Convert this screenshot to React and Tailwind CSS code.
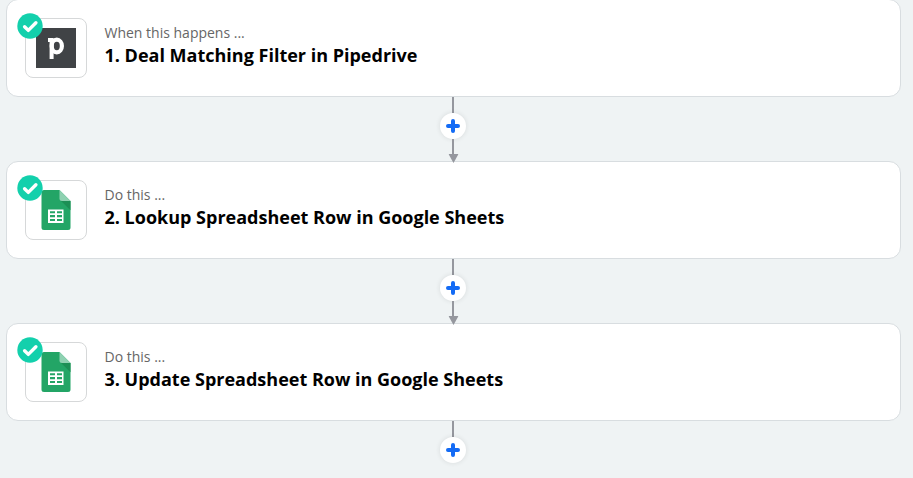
const steps = [
  { id: 1, label: "When this happens ...", title: "1. Deal Matching Filter in Pipedrive", app: "pipedrive" },
  { id: 2, label: "Do this ...", title: "2. Lookup Spreadsheet Row in Google Sheets", app: "sheets" },
  { id: 3, label: "Do this ...", title: "3. Update Spreadsheet Row in Google Sheets", app: "sheets" },
];

const PipedriveLogo = () => (
  <div className="flex h-10 w-10 items-center justify-center bg-[#404346]">
    <svg viewBox="0 0 40 40" className="h-10 w-10" fill="none">
      <path d="M12 12h3.6v19" stroke="#fff" strokeWidth="4" />
      <ellipse cx="20.8" cy="18" rx="5.1" ry="6.3" stroke="#fff" strokeWidth="4.2" />
    </svg>
  </div>
);

const SheetsLogo = () => (
  <svg viewBox="0 0 30 40" className="h-10 w-[30px]">
    <path d="M2.5 0H18.5L29.5 11V37.5a2.5 2.5 0 0 1-2.5 2.5H3A2.5 2.5 0 0 1 .5 37.5V2.5A2.5 2.5 0 0 1 3 0Z" fill="#23a566" />
    <path d="M19.3 10.3 29.5 20.3V11Z" fill="#1c8f55" />
    <path d="M18.5 0 29.5 11H21a2.5 2.5 0 0 1-2.5-2.5Z" fill="#8ed1b1" />
    <path
      d="M7 19.5H22.5V33H7ZM9 21.2V23.2H14V21.2ZM16 21.2V23.2H21V21.2ZM9 25V27.2H14V25ZM16 25V27.2H21V25ZM9 29V31H14V29ZM16 29V31H21V29Z"
      fill="#fff"
      fillRule="evenodd"
    />
  </svg>
);

const CheckBadge = () => (
  <svg viewBox="0 0 26 26" className="absolute -left-[9px] -top-[6px] h-[26px] w-[26px]">
    <circle cx="13" cy="13" r="12.7" fill="#13d0ac" />
    <path d="m7.6 13.7 3.7 3.7 7.6-7.6" fill="none" stroke="#fff" strokeWidth="3.4" strokeLinecap="round" strokeLinejoin="round" />
  </svg>
);

const StepCard = ({ step }) => (
  <section className="flex h-[98px] w-full shrink-0 items-start rounded-xl border border-[#d8dde0] bg-white px-[18px] pt-[18px]">
    <div className="relative flex h-[60px] w-[62px] shrink-0 items-center justify-center rounded-lg border border-[#d6d8d9]">
      {step.app === "pipedrive" ? <PipedriveLogo /> : <SheetsLogo />}
      <CheckBadge />
    </div>
    <div className="ml-[17.5px] pt-1">
      <p className="text-sm leading-[21px] text-[#666]">{step.label}</p>
      <h2 className="text-lg leading-6 font-bold text-black">{step.title}</h2>
    </div>
  </section>
);

const Connector = ({ last }) => (
  <div className="relative flex h-16 w-[893px] shrink-0 flex-col items-center">
    <div className="h-4 w-0.5 bg-[#95979e]" />
    <button aria-label="Add a step" className="flex h-[26px] w-[26px] shrink-0 items-center justify-center rounded-full bg-white shadow-[0_0_4px_1px_rgba(0,0,0,0.07)]">
      <svg viewBox="0 0 14 14" className="h-3.5 w-3.5">
        <path d="M7 2v10M2 7h10" stroke="#136bf5" strokeWidth="4" strokeLinecap="round" />
      </svg>
    </button>
    {!last && (
      <>
        <div className="h-[15px] w-0.5 bg-[#95979e]" />
        <svg viewBox="0 0 10 9" className="absolute top-[57px] left-1/2 z-10 h-[9px] w-2.5 -translate-x-[4.5px]">
          <path d="M0 0h10L5 9Z" fill="#95979e" />
        </svg>
      </>
    )}
  </div>
);

export default function App() {
  return (
    <main className="h-[478px] overflow-hidden bg-[#eff3f4] font-['Open_Sans',sans-serif]">
      <div className="-mt-px ml-1.5 flex w-[895px] flex-col">
        {steps.map((step, i) => (
          <div key={step.id}>
            <StepCard step={step} />
            <Connector last={i === steps.length - 1} />
          </div>
        ))}
      </div>
    </main>
  );
}
